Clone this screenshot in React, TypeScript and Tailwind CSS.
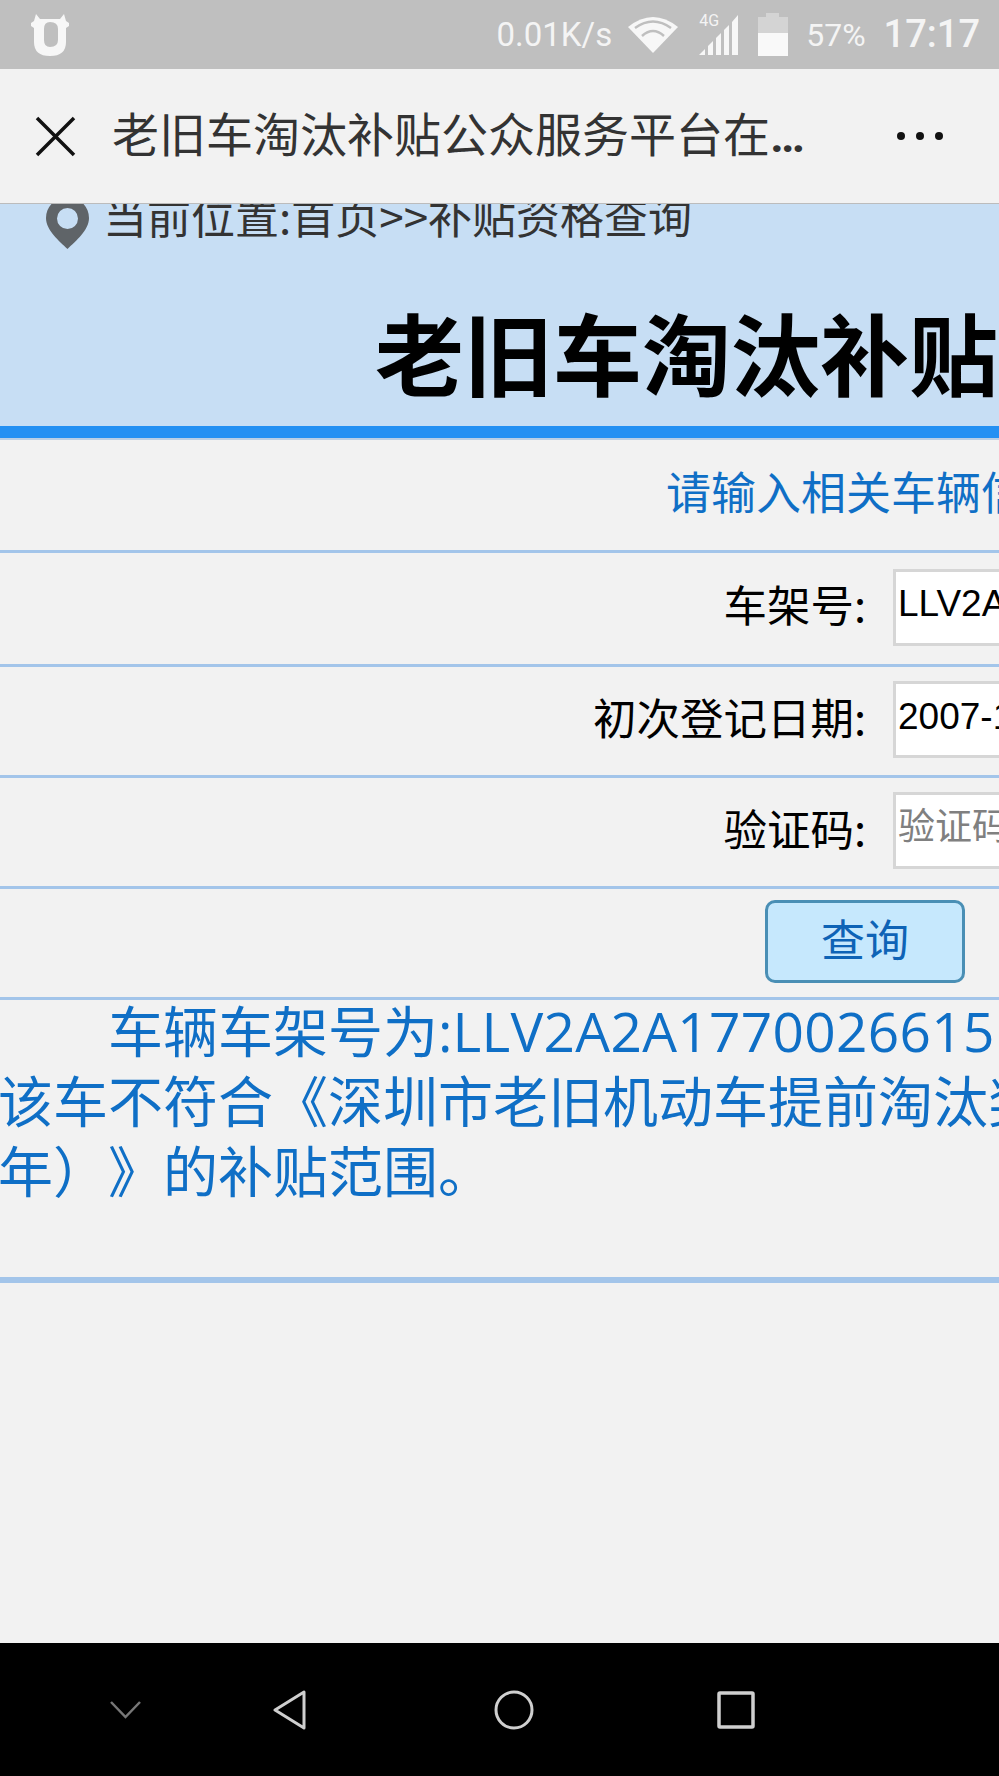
import React from 'react';

const rowClass = 'flex h-[111px] items-center border-b-[3px] border-[#a3c5ea] pb-[3px]';
const labelClass = 'mb-[6px] w-[866px] shrink-0 text-right text-[43.5px] leading-none text-black';
const inputClass =
  "ml-[27px] h-[77px] w-[420px] shrink-0 border-[3px] border-[#d6d6d6] bg-white pb-[6px] pl-[2px] text-[37px] text-black outline-none placeholder:text-[#808080] font-['Liberation_Sans','Noto_Sans_CJK_SC',sans-serif]";

function StatusBar() {
  return (
    <div className="relative flex h-[69px] shrink-0 items-center bg-[#bfbfbf] text-[#f4f4f4]">
      <svg className="ml-[31px]" width="38" height="42" viewBox="0 0 38 42" fill="none">
        <path d="M5 0 L9 5 L29 5 L33 0 L35 7 L38 9 L38 12 L35 14 L35 28 Q35 42 19 42 Q3 42 3 28 L3 14 L0 12 L0 9 L3 7 Z M19 8 Q13 8 13 15 L13 26 Q13 33 19 33 Q27 33 27 26 L27 15 Q27 8 19 8 Z" fill="#f7f7f7" fillRule="evenodd" />
      </svg>
      <span className="ml-auto text-[33px] font-['Roboto',sans-serif]">0.01K/s</span>
      <svg className="ml-[16px]" width="50" height="38" viewBox="0 0 50 38" fill="none">
        <path d="M25 37 L0 11 Q25 -9 50 11 Z" fill="#f7f7f7" />
        <path d="M7 12 Q25 -1 43 12" stroke="#bfbfbf" strokeWidth="2.5" />
        <path d="M14 20 Q25 10 36 20" stroke="#bfbfbf" strokeWidth="2.5" />
      </svg>
      <div className="relative ml-[21px] h-[41px] w-[40px]">
        <span className="absolute left-0 top-[-3px] text-[16px] leading-[20px] font-['Roboto',sans-serif]">4G</span>
        <svg className="absolute left-0 top-0" width="40" height="41" viewBox="0 0 40 41" fill="#f7f7f7">
          <path d="M0 41 L6 35 L6 41 Z" />
          <path d="M9 32 L14 27 L14 41 L9 41 Z" />
          <path d="M17 24 L22 19 L22 41 L17 41 Z" />
          <path d="M25 16 L30 11 L30 41 L25 41 Z" />
          <path d="M33 8 L39 1 L39 41 L33 41 Z" />
        </svg>
      </div>
      <svg className="ml-[19px]" width="30" height="43" viewBox="0 0 30 43">
        <path d="M8 0 H21 V4 H30 V21 H0 V4 H8 Z" fill="#d4d4d4" />
        <rect x="0" y="20" width="30" height="23" fill="#f9f9f9" />
      </svg>
      <span className="ml-[18px] text-[32px] font-['Roboto',sans-serif]">57%</span>
      <span className="ml-[18px] mr-[19px] text-[38px] font-medium font-['Roboto',sans-serif]">17:17</span>
    </div>
  );
}

function NavBar() {
  return (
    <div className="flex h-[135px] shrink-0 items-center border-b border-[#bcbcbc] bg-[#f2f2f2]">
      <svg className="ml-[35px]" width="41" height="41" viewBox="0 0 41 41" stroke="#111" strokeWidth="3.5" fill="none">
        <path d="M2 2 L39 39 M39 2 L2 39" />
      </svg>
      <span className="mb-[6px] ml-[36px] whitespace-nowrap text-[47px] leading-none text-[#333]">
        老旧车淘汰补贴公众服务平台在<span className="font-['Roboto',sans-serif] font-bold">…</span>
      </span>
      <div className="ml-auto mr-[56px] flex gap-[11px]">
        <span className="h-[8px] w-[8px] rounded-full bg-[#111]" />
        <span className="h-[8px] w-[8px] rounded-full bg-[#111]" />
        <span className="h-[8px] w-[8px] rounded-full bg-[#111]" />
      </div>
    </div>
  );
}

function Content() {
  return (
    <div className="min-h-0 flex-1 overflow-hidden bg-[#f2f2f2]">
      <div className="w-[1400px]">
        {/* header, scrolled up a little */}
        <div className="-mt-[17px] h-[239px] bg-[#c7def4]">
          <div className="flex h-[56px] items-center whitespace-nowrap pl-[46px] text-[#333]">
            <svg width="43" height="52" viewBox="0 0 43 52" className="mt-[16px]">
              <path
                d="M21.5 0 C33 0 43 9 43 21 C43 33 30 44 21.5 52 C13 44 0 33 0 21 C0 9 10 0 21.5 0 Z M21.5 11 A10.5 10.5 0 1 0 21.5 32 A10.5 10.5 0 1 0 21.5 11 Z"
                fill="#5f6468"
                fillRule="evenodd"
              />
            </svg>
            <span className="ml-[14px] text-[44px] leading-none">当前位置:首页&gt;&gt;补贴资格查询</span>
          </div>
          <div className="mt-[58px] whitespace-nowrap pl-[375px] text-[89px] font-bold leading-[100px] text-black">
            老旧车淘汰补贴公众服务平台
          </div>
        </div>
        <div className="h-[14px] border-b-[2px] border-[#b9cfe6] bg-[#2390f3]" />

        <div className="flex h-[113px] items-center whitespace-nowrap border-b-[3px] border-[#a3c5ea] pb-[8px] pl-[666px] text-[45px] text-[#0f6fc6]">
          请输入相关车辆信息进行补贴资格查询
        </div>

        <div className={`${rowClass} h-[114px]`}>
          <label className={labelClass}>车架号:</label>
          <input className={inputClass} readOnly value="LLV2A2A1770026615" />
        </div>
        <div className={rowClass}>
          <label className={labelClass}>初次登记日期:</label>
          <input className={inputClass} readOnly value="2007-10-15" />
        </div>
        <div className={rowClass}>
          <label className={labelClass}>验证码:</label>
          <input className={inputClass} readOnly placeholder="验证码" />
        </div>
        <div className={rowClass}>
          <button className="ml-[765px] h-[83px] w-[200px] rounded-[10px] border-[3px] border-[#4a8fb5] bg-[#c6e8fd] pb-[8px] text-[44px] leading-none text-[#0e63b6]">
            查询
          </button>
        </div>

        <div className="h-[283px] overflow-hidden whitespace-nowrap border-b-[6px] border-[#a3c5ea] text-[55px] leading-[70px] text-[#0f6fc6] [text-spacing-trim:space-all] font-['Open_Sans','Noto_Sans_CJK_SC',sans-serif]">
          <p className="-mt-[4px] -ml-[2px] indent-[110px]">
            车辆车架号为:<span className="tracking-[0.3px]">LLV2A2A1770026615</span>
          </p>
          <p className="-ml-[2px]">该车不符合《深圳市老旧机动车提前淘汰奖励补贴办法</p>
          <p className="-ml-[2px]">年）》的补贴范围。</p>
        </div>
      </div>
    </div>
  );
}

function BottomBar() {
  return (
    <div className="flex h-[133px] shrink-0 items-center bg-black">
      <svg className="ml-[110px]" width="31" height="18" viewBox="0 0 31 18" fill="none" stroke="#777" strokeWidth="2.5">
        <path d="M1 1 L15.5 16 L30 1" />
      </svg>
      <svg className="ml-[132px]" width="34" height="40" viewBox="0 0 34 40" fill="none" stroke="#cfcfcf" strokeWidth="3" strokeLinejoin="round">
        <path d="M31 2 L31 38 L2 20 Z" />
      </svg>
      <svg className="ml-[187px]" width="40" height="40" viewBox="0 0 40 40" fill="none" stroke="#cfcfcf" strokeWidth="3">
        <circle cx="20" cy="20" r="18" />
      </svg>
      <svg className="ml-[183px]" width="38" height="38" viewBox="0 0 38 38" fill="none" stroke="#cfcfcf" strokeWidth="3.5" strokeLinejoin="round">
        <rect x="2" y="2" width="34" height="34" rx="1" />
      </svg>
    </div>
  );
}

export default function App() {
  return (
    <div
      lang="zh-CN"
      className="flex h-[1776px] w-[999px] flex-col overflow-hidden font-['Noto_Sans_CJK_SC','Noto_Sans',sans-serif]"
    >
      <StatusBar />
      <NavBar />
      <Content />
      <BottomBar />
    </div>
  );
}
